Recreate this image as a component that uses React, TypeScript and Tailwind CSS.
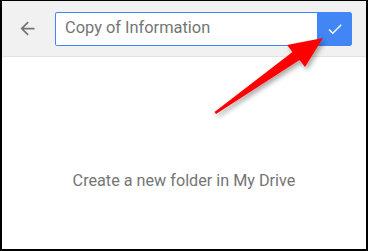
import React from "react";

export default function App() {
  return (
    <div className="relative w-[368px] h-[251px] bg-white border-t border-b-2 border-l-2 border-r-2 border-black overflow-hidden" style={{ fontFamily: "Roboto, 'Noto Sans', sans-serif" }}>
      <div className="flex items-center h-[56px] bg-[#f1f1f1] border-b border-[#e2e2e2]">
        <div className="pl-[15px] pr-[17px] flex items-center">
          <svg width="21" height="21" viewBox="0 0 24 24" fill="#757575">
            <path d="M20 11H7.83l5.59-5.59L12 4l-8 8 8 8 1.41-1.41L7.83 13H20v-2z" />
          </svg>
        </div>
        <div className="flex h-[34px] w-[297px] rounded-[2px] overflow-hidden">
          <div className="flex-1 flex items-center bg-white border border-r-0 border-[#4285f4] rounded-l-[2px] pl-[9px] text-[16.4px] text-[#757575]">
            Copy of Information
          </div>
          <div className="w-[35px] bg-[#4285f4] rounded-r-[2px] flex items-center justify-center">
            <svg width="18" height="18" viewBox="0 0 24 24" fill="#ffffff">
              <path d="M9 16.17L4.83 12l-1.42 1.41L9 19 21 7l-1.41-1.41z" />
            </svg>
          </div>
        </div>
      </div>
      <div className="flex justify-center pt-[114px]">
        <span className="text-[16.2px] leading-[20px] text-[#757575]">Create a new folder in My Drive</span>
      </div>
      <svg className="absolute left-0 top-0" width="368" height="251" viewBox="0 0 368 251">
        <defs>
          <filter id="sh" x="-20%" y="-20%" width="140%" height="140%">
            <feDropShadow dx="2" dy="3" stdDeviation="2.5" floodColor="#000" floodOpacity="0.35" />
          </filter>
        </defs>
        <polygon
          points="321,37 303,66 297.5,59 214,113 212.5,111 290.5,51 285,44"
          fill="#ff0000"
          filter="url(#sh)"
        />
      </svg>
    </div>
  );
}
